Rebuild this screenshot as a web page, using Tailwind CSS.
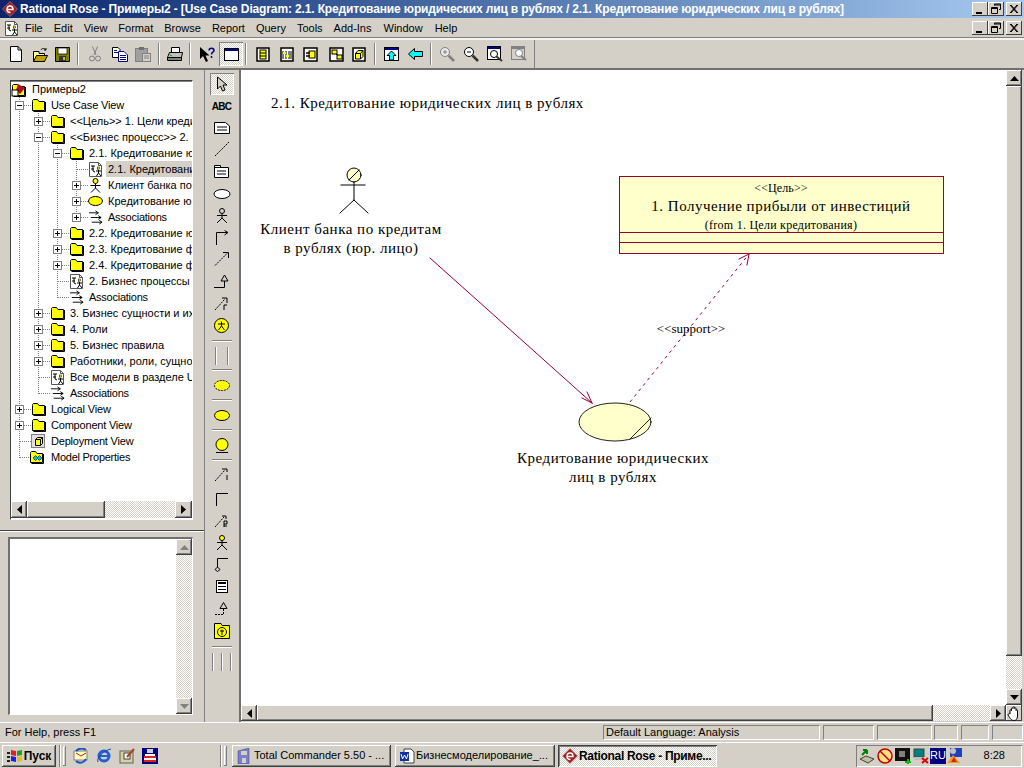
<!DOCTYPE html>
<html><head><meta charset="utf-8"><script src="https://cdn.jsdelivr.net/npm/@tailwindcss/browser@4"></script></head>
<body class="bg-[#d4d0c8]">
<svg width="0" height="0" class="absolute">
<defs>
<symbol id="folder" viewBox="0 0 15 14"><path d="M1.5 3.5V2.500L2.500 1.500H6.500L8 3.500H13.500V12.500H1.500Z" fill="#ffff00" stroke="#000"/><path d="M14.500 4V13.500H2.500" fill="none" stroke="#000"/></symbol>
<symbol id="diagdoc" viewBox="0 0 15 15"><path d="M1.500 .5H10.500L13.500 3.500V14.500H1.500Z" fill="#fff" stroke="#555"/><path d="M10.500 .5V3.500H13.500" fill="none" stroke="#555"/><path d="M3 4H7M5 4V9L7 10M3 7H6M10 6.500V7.500M8 9H13M10.500 8V11L8.500 14M10.500 11L13 14" fill="none" stroke="#000"/><rect x="9.500" y="5" width="2" height="2" fill="#ffff00" stroke="#000" stroke-width=".5"/></symbol>
<symbol id="person" viewBox="0 0 15 15"><circle cx="7.500" cy="3" r="2.500" fill="#ffff00" stroke="#000"/><path d="M7.500 5.500V10M2.500 7.500H12.500M7.500 10L3 14.500M7.500 10L12 14.500" fill="none" stroke="#000"/></symbol>
<symbol id="assoc" viewBox="0 0 16 15"><path d="M1 2.500H11M8 .5L11 2.500L8 4.500M3 7.500H14M11 5.500L14 7.500L11 9.500M4 12.500H15M12 10.500L15 12.500L12 14.500" fill="none" stroke="#000"/></symbol>
<symbol id="plus" viewBox="0 0 9 9"><rect x=".5" y=".5" width="8" height="8" fill="#fff" stroke="#808080"/><path d="M2 4.500H7M4.500 2V7" stroke="#000"/></symbol>
<symbol id="minus" viewBox="0 0 9 9"><rect x=".5" y=".5" width="8" height="8" fill="#fff" stroke="#808080"/><path d="M2 4.500H7" stroke="#000"/></symbol>
<symbol id="rose" viewBox="0 0 16 16"><path d="M8 .5L15.500 8L8 15.500L.5 8Z" fill="#a02020" stroke="#d08080" stroke-width=".6"/><path d="M5 8.500H11C11 6 9.500 5 8 5C6 5 5 6.500 5 8.500C5 10.500 6.500 11.500 8.500 11.500" fill="none" stroke="#fff" stroke-width="1.500"/></symbol>
<symbol id="winmin" viewBox="0 0 16 14"><path d="M4 10H10V12H4Z" fill="#000"/></symbol>
<symbol id="winres" viewBox="0 0 16 14"><path d="M6.500 3.500V2H12.500V7.500H11M6.500 3H12.500M3.500 5.500H9.500V11.500H3.500ZM3.500 6.500H9.500" fill="none" stroke="#000"/></symbol>
<symbol id="winx" viewBox="0 0 16 14"><path d="M4 3L11 11M5 3L12 11M11 3L4 11M12 3L5 11" fill="none" stroke="#000"/></symbol>
</defs>
</svg>
<div class="flex h-[768px] w-[1024px] flex-col overflow-hidden bg-[#d4d0c8] font-['Liberation_Sans',sans-serif] text-[11px] text-black">

<!-- title bar -->
<div class="flex h-[18px] shrink-0 items-center bg-gradient-to-r from-[#0a246a] to-[#a6caf0] pl-[2px] pr-[2px]">
  <svg class="shrink-0" width="16" height="16"><use href="#rose"/></svg>
  <span class="ml-[2px] whitespace-nowrap text-[12px] font-bold tracking-[-0.135px] text-white">Rational Rose - Примеры2 - [Use Case Diagram: 2.1. Кредитование юридических лиц в рублях / 2.1. Кредитование юридических лиц в рублях]</span>
  <div class="ml-auto flex items-center">
    <div class="flex h-[14px] w-[16px] items-center justify-center bg-[#d4d0c8] shadow-[inset_-1px_-1px_#404040,inset_1px_1px_#fff]"><svg width="16" height="14"><use href="#winmin"/></svg></div>
    <div class="flex h-[14px] w-[16px] items-center justify-center bg-[#d4d0c8] shadow-[inset_-1px_-1px_#404040,inset_1px_1px_#fff]"><svg width="16" height="14"><use href="#winres"/></svg></div>
    <div class="ml-[2px] flex h-[14px] w-[16px] items-center justify-center bg-[#d4d0c8] shadow-[inset_-1px_-1px_#404040,inset_1px_1px_#fff]"><svg width="16" height="14"><use href="#winx"/></svg></div>
  </div>
</div>

<!-- menu bar -->
<div class="flex h-[20px] shrink-0 items-center pl-[4px] pr-[2px]">
  <svg width="15" height="15"><use href="#diagdoc"/></svg>
  <div class="ml-[6px] flex gap-[11px]">
    <span>File</span><span>Edit</span><span>View</span><span>Format</span><span>Browse</span><span>Report</span><span>Query</span><span>Tools</span><span>Add-Ins</span><span class="ml-[1px]">Window</span><span class="ml-[1px]">Help</span>
  </div>
  <div class="ml-auto flex items-center">
    <div class="flex h-[14px] w-[16px] items-center justify-center shadow-[inset_-1px_-1px_#404040,inset_1px_1px_#fff]"><svg width="16" height="14"><use href="#winmin"/></svg></div>
    <div class="flex h-[14px] w-[16px] items-center justify-center shadow-[inset_-1px_-1px_#404040,inset_1px_1px_#fff]"><svg width="16" height="14"><use href="#winres"/></svg></div>
    <div class="ml-[2px] flex h-[14px] w-[16px] items-center justify-center shadow-[inset_-1px_-1px_#404040,inset_1px_1px_#fff]"><svg width="16" height="14"><use href="#winx"/></svg></div>
  </div>
</div>

<!-- toolbar -->
<div class="flex h-[32px] shrink-0 items-center border-b-2 border-t-[2px] border-b-[#707070] border-t-[#f4f3f0] pl-[4px] shadow-[0_-1px_#808080]">
  <div class="flex h-full w-[24px] items-center justify-center"><svg width="14" height="16"><path d="M1.500 .5H9L12.500 4V15.500H1.500Z" fill="#fff" stroke="#000"/><path d="M9 .5V4H12.500" fill="none" stroke="#000"/></svg></div>
  <div class="flex h-full w-[23px] items-center justify-center"><svg width="16" height="15"><path d="M1.500 4.500H7V6.500H12.500V14.500H1.500Z" fill="#ffff99" stroke="#000"/><path d="M1.500 14.500L4.500 8.500H15.500L12.500 14.500Z" fill="#c0a000" stroke="#000"/><path d="M9 3C10 1 12 1 14 3M14 1V3H12" fill="none" stroke="#000"/></svg></div>
  <div class="flex h-full w-[23px] items-center justify-center"><svg width="15" height="15"><path d="M.5 .5H14.500V14.500H.5Z" fill="#808000" stroke="#000"/><rect x="3" y="1" width="9" height="6" fill="#fff" stroke="#000" stroke-width=".7"/><rect x="4" y="9" width="7" height="5" fill="#333"/><rect x="8" y="10" width="2" height="3" fill="#c0c000"/></svg></div>
  <div class="flex h-full w-[8px] items-center justify-center"><div class="h-[22px] w-[2px] border-l border-r border-l-[#808080] border-r-white"></div></div>
  <div class="flex h-full w-[26px] items-center justify-center"><svg width="12" height="16"><path d="M3.500 .5L7 9M8.500 .5L5 9" stroke="#808080" fill="none"/><circle cx="3" cy="12.500" r="2.500" fill="none" stroke="#808080"/><circle cx="9" cy="12.500" r="2.500" fill="none" stroke="#808080"/></svg></div>
  <div class="flex h-full w-[23px] items-center justify-center"><svg width="16" height="15"><path d="M.5 .5H6L8 2.500V10.500H.5Z" fill="#fff" stroke="#000"/><path d="M6.500 4.500H12L15.500 8V14.500H6.500Z" fill="#fff" stroke="#000080"/><path d="M2 3.500H5M2 5.500H6M8 8.500H14M8 10.500H14M8 12.500H14" stroke="#000080"/></svg></div>
  <div class="flex h-full w-[23px] items-center justify-center"><svg width="16" height="16"><rect x=".5" y="2.500" width="12" height="13" fill="#a0a0a0" stroke="#808080"/><rect x="4" y="1" width="5" height="3" fill="#707070"/><rect x="7.500" y="7.500" width="8" height="8" fill="#d4d0c8" stroke="#808080"/><path d="M9 10H14M9 12H14" stroke="#808080"/></svg></div>
  <div class="flex h-full w-[10px] items-center justify-center"><div class="h-[22px] w-[2px] border-l border-r border-l-[#808080] border-r-white"></div></div>
  <div class="flex h-full w-[21px] items-center justify-center"><svg width="16" height="15"><path d="M4.500 .5H12.500V5.500H4.500Z" fill="#fff" stroke="#000"/><path d="M2.500 5.500H15.500L14.500 10.500H.5Z" fill="#c0c0c0" stroke="#000"/><path d="M.5 10.500H14.500V13.500H.5Z" fill="#808080" stroke="#000"/><rect x="3" y="8" width="2" height="1" fill="#00c000"/></svg></div>
  <div class="flex h-full w-[10px] items-center justify-center"><div class="h-[22px] w-[2px] border-l border-r border-l-[#808080] border-r-white"></div></div>
  <div class="flex h-full w-[24px] items-center justify-center"><svg width="16" height="15"><path d="M1 0V12L4 9L7 15L9 14L6.500 8.500H10.500Z" fill="#000"/><path d="M10 3.500C10 .5 15 .5 15 3.500C15 5.500 12.500 5 12.500 7.500M12.500 9V11" fill="none" stroke="#000080" stroke-width="1.500"/></svg></div>
  <div class="flex h-[24px] w-[24px] items-center justify-center bg-[repeating-conic-gradient(#d4d0c8_0_25%,#fff_0_50%)] bg-[length:2px_2px] shadow-[inset_1px_1px_#808080,inset_-1px_-1px_#fff]"><svg width="15" height="13"><rect x=".5" y=".5" width="14" height="12" fill="#fff" stroke="#000"/><rect x="1" y="1" width="13" height="2" fill="#000080"/></svg></div>
  <div class="flex h-full w-[6px] items-center justify-center"><div class="h-[22px] w-[2px] border-l border-r border-l-[#808080] border-r-white"></div></div>
  <div class="flex h-full w-[28px] items-center justify-center"><svg width="14" height="15"><rect x="1" y="1" width="12" height="13" fill="#fff" stroke="#000" stroke-width="1.500"/><rect x="4" y="3" width="6" height="9" fill="#ffff00" stroke="#000"/><path d="M4 6H10M4 9H10" stroke="#000"/></svg></div>
  <div class="flex h-full w-[20px] items-center justify-center"><svg width="14" height="15"><rect x="1" y="1" width="12" height="13" fill="#fff" stroke="#000" stroke-width="1.500"/><path d="M3 4V12M6 4V12M9 4V12M11 4V12" stroke="#000"/><path d="M3 6H6M6 9H9" stroke="#ffff00" stroke-width="2"/></svg></div>
  <div class="flex h-full w-[27px] items-center justify-center"><svg width="15" height="15"><rect x="1" y="1" width="13" height="13" fill="#fff" stroke="#000" stroke-width="1.500"/><rect x="6" y="4" width="6" height="7" fill="#ffff00" stroke="#000"/><path d="M3 6H7M3 9H7" stroke="#000" stroke-width="1.500"/></svg></div>
  <div class="flex h-full w-[24px] items-center justify-center"><svg width="15" height="15"><rect x="1" y="1" width="13" height="13" fill="#fff" stroke="#000" stroke-width="1.500"/><rect x="3" y="3" width="5" height="4" fill="#ffff00" stroke="#000"/><rect x="8" y="8" width="5" height="4" fill="#ffff00" stroke="#000"/><path d="M7 7L9 8" stroke="#000"/></svg></div>
  <div class="flex h-full w-[22px] items-center justify-center"><svg width="14" height="15"><rect x="1" y="1" width="12" height="13" fill="#fff" stroke="#000" stroke-width="1.500"/><path d="M3.500 6.500L6 3.500H11V9.500L8.500 12H3.500Z" fill="#ffff00" stroke="#000"/><path d="M3.500 6.500H8.500V12M8.500 6.500L11 3.500" fill="none" stroke="#000"/></svg></div>
  <div class="flex h-full w-[9px] items-center justify-center"><div class="h-[22px] w-[2px] border-l border-r border-l-[#808080] border-r-white"></div></div>
  <div class="flex h-full w-[24px] items-center justify-center"><svg width="15" height="14"><rect x=".5" y=".5" width="14" height="13" fill="#fff" stroke="#000"/><rect x="1" y="1" width="13" height="2" fill="#000080"/><path d="M7.500 4L12 8.500H9.500V13H5.500V8.500H3Z" fill="#00ffff" stroke="#000"/></svg></div>
  <div class="flex h-full w-[24px] items-center justify-center"><svg width="15" height="12"><path d="M.5 6L6.500 .5V3.500H14.500V8.500H6.500V11.500Z" fill="#00ffff" stroke="#000"/></svg></div>
  <div class="flex h-full w-[8px] items-center justify-center"><div class="h-[22px] w-[2px] border-l border-r border-l-[#808080] border-r-white"></div></div>
  <div class="flex h-full w-[24px] items-center justify-center"><svg width="16" height="16"><circle cx="6" cy="6" r="4.500" fill="#e8e8e8" stroke="#808080"/><path d="M4 6H8M6 4V8" stroke="#808080"/><path d="M9.500 9.500L15 15" stroke="#808080" stroke-width="2.500"/></svg></div>
  <div class="flex h-full w-[23px] items-center justify-center"><svg width="16" height="16"><circle cx="6" cy="6" r="4.500" fill="#fff" stroke="#000"/><path d="M4 6H8" stroke="#000"/><path d="M9.500 9.500L15 15" stroke="#333" stroke-width="2.500"/></svg></div>
  <div class="flex h-full w-[25px] items-center justify-center"><svg width="16" height="16"><rect x=".5" y=".5" width="13" height="13" fill="#fff" stroke="#000"/><rect x="1" y="1" width="12" height="2" fill="#000080"/><circle cx="7" cy="8" r="3.500" fill="#fff" stroke="#000"/><path d="M9.500 10.500L15 15" stroke="#333" stroke-width="2"/></svg></div>
  <div class="flex h-full w-[24px] items-center justify-center"><svg width="16" height="16"><rect x=".5" y=".5" width="13" height="13" fill="#d4d0c8" stroke="#808080"/><rect x="1" y="1" width="12" height="2" fill="#808080"/><circle cx="8" cy="7" r="3.500" fill="#fff" stroke="#808080"/><path d="M10 10L15 14" stroke="#808080" stroke-width="2"/></svg></div>
  <div class="ml-[3px] h-full w-[1px] bg-[#808080]"></div>
</div>

<!-- main -->
<div class="flex h-[652px] shrink-0">
  <!-- left panel -->
  <div class="flex w-[204px] shrink-0 flex-col pl-[10px] pt-[10px]">
    <div class="flex h-[440px] w-[183px] flex-col border-b border-l-[1px] border-r border-t-[1px] border-b-white border-l-[#404040] border-r-white border-t-[#404040] bg-white shadow-[inset_0_1px_#808080]">
      <div class="relative h-[420px] overflow-hidden">
        <svg class="absolute left-0 top-0" width="181" height="420" stroke="#808080" stroke-dasharray="1 1" shape-rendering="crispEdges" fill="none">
          <path d="M8.500 16V376.500M27.500 24V312.500M46.500 56V216.500M65.500 72V136.500"/>
          <path d="M8.500 24.500H20M8.500 328.500H20M8.500 344.500H20M8.500 360.500H20M8.500 376.500H20"/>
          <path d="M27.500 40.500H39M27.500 56.500H39M27.500 232.500H39M27.500 248.500H39M27.500 264.500H39M27.500 280.500H39M27.500 296.500H39M27.500 312.500H39"/>
          <path d="M46.500 72.500H58M46.500 152.500H58M46.500 168.500H58M46.500 184.500H58M46.500 200.500H58M46.500 216.500H58"/>
          <path d="M65.500 88.500H77M65.500 104.500H77M65.500 120.500H77M65.500 136.500H77"/>
        </svg>
        <div class="relative whitespace-nowrap">
          <div class="flex h-4 w-max items-center"><svg width="16" height="15"><use href="#folder" width="15" height="14" y="1"/><path d="M7 2L14 6L9 12L5 8Z" fill="#b01010"/><rect x="1" y="8" width="6" height="6" fill="#fff" stroke="#000"/></svg><span class="ml-[5px]">Примеры2</span></div>
          <div class="flex h-4 w-max items-center pl-[4px]"><svg width="9" height="9"><use href="#minus"/></svg><svg class="ml-[7px]" width="15" height="14"><use href="#folder"/></svg><span class="ml-[5px] tracking-[-0.15px]">Use Case View</span></div>
          <div class="flex h-4 w-max items-center pl-[23px]"><svg width="9" height="9"><use href="#plus"/></svg><svg class="ml-[7px]" width="15" height="14"><use href="#folder"/></svg><span class="ml-[5px]">&lt;&lt;Цель&gt;&gt; 1. Цели креди</span></div>
          <div class="flex h-4 w-max items-center pl-[23px]"><svg width="9" height="9"><use href="#minus"/></svg><svg class="ml-[7px]" width="15" height="14"><use href="#folder"/></svg><span class="ml-[5px]">&lt;&lt;Бизнес процесс&gt;&gt; 2.</span></div>
          <div class="flex h-4 w-max items-center pl-[42px]"><svg width="9" height="9"><use href="#minus"/></svg><svg class="ml-[7px]" width="15" height="14"><use href="#folder"/></svg><span class="ml-[5px]">2.1. Кредитование ю</span></div>
          <div class="flex h-4 w-max items-center pl-[61px]"><div class="w-[9px]"></div><svg class="ml-[7px]" width="15" height="15"><use href="#diagdoc"/></svg><span class="ml-[3px] flex h-4 w-[86px] items-center overflow-hidden bg-[#d4d0c8] pl-[2px]">2.1. Кредитовани</span></div>
          <div class="flex h-4 w-max items-center pl-[61px]"><svg width="9" height="9"><use href="#plus"/></svg><svg class="ml-[7px]" width="15" height="15"><use href="#person"/></svg><span class="ml-[5px]">Клиент банка по</span></div>
          <div class="flex h-4 w-max items-center pl-[61px]"><svg width="9" height="9"><use href="#plus"/></svg><svg class="ml-[7px]" width="15" height="10"><ellipse cx="7.500" cy="5" rx="7" ry="4.500" fill="#ffff00" stroke="#000"/></svg><span class="ml-[5px]">Кредитование ю</span></div>
          <div class="flex h-4 w-max items-center pl-[61px]"><svg width="9" height="9"><use href="#plus"/></svg><svg class="ml-[7px]" width="15" height="15"><use href="#assoc"/></svg><span class="ml-[5px] tracking-[-0.25px]">Associations</span></div>
          <div class="flex h-4 w-max items-center pl-[42px]"><svg width="9" height="9"><use href="#plus"/></svg><svg class="ml-[7px]" width="15" height="14"><use href="#folder"/></svg><span class="ml-[5px]">2.2. Кредитование ю</span></div>
          <div class="flex h-4 w-max items-center pl-[42px]"><svg width="9" height="9"><use href="#plus"/></svg><svg class="ml-[7px]" width="15" height="14"><use href="#folder"/></svg><span class="ml-[5px]">2.3. Кредитование ф</span></div>
          <div class="flex h-4 w-max items-center pl-[42px]"><svg width="9" height="9"><use href="#plus"/></svg><svg class="ml-[7px]" width="15" height="14"><use href="#folder"/></svg><span class="ml-[5px]">2.4. Кредитование ф</span></div>
          <div class="flex h-4 w-max items-center pl-[42px]"><div class="w-[9px]"></div><svg class="ml-[7px]" width="15" height="15"><use href="#diagdoc"/></svg><span class="ml-[5px]">2. Бизнес процессы</span></div>
          <div class="flex h-4 w-max items-center pl-[42px]"><div class="w-[9px]"></div><svg class="ml-[7px]" width="15" height="15"><use href="#assoc"/></svg><span class="ml-[5px] tracking-[-0.25px]">Associations</span></div>
          <div class="flex h-4 w-max items-center pl-[23px]"><svg width="9" height="9"><use href="#plus"/></svg><svg class="ml-[7px]" width="15" height="14"><use href="#folder"/></svg><span class="ml-[5px]">3. Бизнес сущности и их</span></div>
          <div class="flex h-4 w-max items-center pl-[23px]"><svg width="9" height="9"><use href="#plus"/></svg><svg class="ml-[7px]" width="15" height="14"><use href="#folder"/></svg><span class="ml-[5px]">4. Роли</span></div>
          <div class="flex h-4 w-max items-center pl-[23px]"><svg width="9" height="9"><use href="#plus"/></svg><svg class="ml-[7px]" width="15" height="14"><use href="#folder"/></svg><span class="ml-[5px]">5. Бизнес правила</span></div>
          <div class="flex h-4 w-max items-center pl-[23px]"><svg width="9" height="9"><use href="#plus"/></svg><svg class="ml-[7px]" width="15" height="14"><use href="#folder"/></svg><span class="ml-[5px]">Работники, роли, сущно</span></div>
          <div class="flex h-4 w-max items-center pl-[23px]"><div class="w-[9px]"></div><svg class="ml-[7px]" width="15" height="15"><use href="#diagdoc"/></svg><span class="ml-[5px]">Все модели в разделе U</span></div>
          <div class="flex h-4 w-max items-center pl-[23px]"><div class="w-[9px]"></div><svg class="ml-[7px]" width="15" height="15"><use href="#assoc"/></svg><span class="ml-[5px] tracking-[-0.25px]">Associations</span></div>
          <div class="flex h-4 w-max items-center pl-[4px]"><svg width="9" height="9"><use href="#plus"/></svg><svg class="ml-[7px]" width="15" height="14"><use href="#folder"/></svg><span class="ml-[5px] tracking-[-0.15px]">Logical View</span></div>
          <div class="flex h-4 w-max items-center pl-[4px]"><svg width="9" height="9"><use href="#plus"/></svg><svg class="ml-[7px]" width="15" height="14"><use href="#folder"/></svg><span class="ml-[5px] tracking-[-0.2px]">Component View</span></div>
          <div class="flex h-4 w-max items-center pl-[4px]"><div class="w-[9px]"></div><svg class="ml-[7px]" width="15" height="14"><rect x=".5" y=".5" width="13" height="13" fill="#e0e0e0" stroke="#808080"/><path d="M4.500 5.500L6.500 3.500H11.500V9.500L9.500 11.500H4.500Z" fill="#ffff00" stroke="#000"/><path d="M4.500 5.500H9.500V11.500M9.500 5.500L11.500 3.500" fill="none" stroke="#000"/></svg><span class="ml-[5px] tracking-[-0.2px]">Deployment View</span></div>
          <div class="flex h-4 w-max items-center pl-[4px]"><div class="w-[9px]"></div><svg class="ml-[5px] mr-[2px]" width="15" height="14"><use href="#folder"/><path d="M4 8L6.500 5.500L9 8L6.500 10.500ZM8 8L10.500 5.500L13 8L10.500 10.500Z" fill="#00c0e0" stroke="#000" stroke-width=".6"/></svg><span class="ml-[5px] tracking-[-0.25px]">Model Properties</span></div>
        </div>
      </div>
      <!-- tree hscroll -->
      <div class="flex h-[17px] items-stretch bg-[repeating-conic-gradient(#d4d0c8_0_25%,#fff_0_50%)] bg-[length:2px_2px]">
        <div class="flex w-[16px] items-center justify-center bg-[#d4d0c8] shadow-[inset_-1px_-1px_#404040,inset_1px_1px_#fff,inset_-2px_-2px_#808080]"><svg width="5" height="9"><path d="M0 4.500L5 0V9Z"/></svg></div>
        <div class="w-[78px] bg-[#d4d0c8] shadow-[inset_-1px_-1px_#404040,inset_1px_1px_#fff,inset_-2px_-2px_#808080]"></div>
        <div class="ml-auto flex w-[17px] items-center justify-center bg-[#d4d0c8] shadow-[inset_-1px_-1px_#404040,inset_1px_1px_#fff,inset_-2px_-2px_#808080]"><svg width="5" height="9"><path d="M5 4.500L0 0V9Z"/></svg></div>
      </div>
    </div>
    <!-- splitter -->
    <div class="-ml-[10px] mt-[10px] h-[1px] w-[204px] bg-[#404040]"></div>
    <div class="-ml-[10px] h-[1px] w-[204px] bg-white"></div>
    <!-- documentation box -->
    <div class="-ml-[2px] mt-[5px] flex h-[178px] w-[185px] border-b border-l-[2px] border-r border-t-[2px] border-b-white border-l-[#707070] border-r-white border-t-[#707070] bg-white">
      <div class="grow"></div>
      <div class="flex w-[16px] flex-col bg-[repeating-conic-gradient(#d4d0c8_0_25%,#fff_0_50%)] bg-[length:2px_2px]">
        <div class="flex h-[16px] items-center justify-center bg-[#d4d0c8] shadow-[inset_-1px_-1px_#404040,inset_1px_1px_#fff,inset_-2px_-2px_#808080]"><svg width="9" height="5"><path d="M4.500 0L9 5H0Z" fill="#808080"/></svg></div>
        <div class="mt-auto flex h-[16px] items-center justify-center bg-[#d4d0c8] shadow-[inset_-1px_-1px_#404040,inset_1px_1px_#fff,inset_-2px_-2px_#808080]"><svg width="9" height="5"><path d="M4.500 5L9 0H0Z" fill="#808080"/></svg></div>
      </div>
    </div>
  </div>

  <!-- toolbox -->
  <div class="flex w-[37px] shrink-0 flex-col items-center border-l border-r-[2px] border-l-[#808080] border-r-[#707070] pr-[1px] pt-[3px]">
    <div class="flex h-[22px] w-[24px] items-center justify-center bg-[repeating-conic-gradient(#d4d0c8_0_25%,#fff_0_50%)] bg-[length:2px_2px] shadow-[inset_1px_1px_#808080,inset_-1px_-1px_#fff]"><svg width="12" height="16"><path d="M1.500 1V13L4.500 10L6.500 15L9 14L7 9H11Z" fill="#d4d0c8" stroke="#000"/></svg></div>
    <div class="flex h-[22px] items-center text-[10px] font-bold tracking-[-0.7px]">ABC</div>
    <div class="flex h-[21px] items-center"><svg width="16" height="12"><path d="M.5 .5H11.500L15.500 4V11.500H.5Z" fill="#fff" stroke="#000"/><path d="M3 5H13M3 8H13" stroke="#000"/></svg></div>
    <div class="flex h-[22px] items-center"><svg width="16" height="16"><path d="M1 15L15 1" stroke="#000" stroke-dasharray="2 1"/></svg></div>
    <div class="flex h-[22px] items-center"><svg width="15" height="13"><path d="M.5 12.500V.5H6.500V2.500H14.500V12.500Z" fill="#fff" stroke="#000"/><path d="M.5 2.500H7M3 6H12M3 9H12" stroke="#000"/></svg></div>
    <div class="flex h-[23px] items-center"><svg width="18" height="10"><ellipse cx="9" cy="5" rx="8" ry="4.500" fill="#fff" stroke="#000"/></svg></div>
    <div class="flex h-[22px] items-center"><svg width="14" height="16" fill="none" stroke="#000"><circle cx="7" cy="3" r="2.500"/><path d="M7 5.500V10M2 7.500H12M7 10L2 15M7 10L12 15"/></svg></div>
    <div class="flex h-[20px] items-center"><svg width="16" height="15" fill="none" stroke="#000"><path d="M2.500 15V2.500H13M10.500 .5L14 2.500L10.500 5"/></svg></div>
    <div class="flex h-[23px] items-center"><svg width="16" height="15" fill="none" stroke="#000"><path d="M1 14.500L14 1.500" stroke-dasharray="2 1"/><path d="M9 1.500H14.500V7"/></svg></div>
    <div class="flex h-[22px] items-center"><svg width="17" height="15" fill="none" stroke="#000"><path d="M1 13.500H11.500V7"/><path d="M8 7H15L11.500 1Z"/></svg></div>
    <div class="flex h-[22px] items-center"><svg width="16" height="15" fill="none" stroke="#000"><path d="M1 14L11 3" stroke-dasharray="2 1"/><path d="M8 2H13V7M10 14V9H13"/></svg></div>
    <div class="flex h-[23px] items-center"><svg width="15" height="15"><circle cx="7.500" cy="7.500" r="7" fill="#ffff00" stroke="#000"/><path d="M7.500 3.500V8M4 6H11M7.500 8L4.500 12M7.500 8L10.500 12" fill="none" stroke="#000"/></svg></div>
    <div class="mt-[3px] h-[2px] w-[20px] border-t border-b border-t-[#808080] border-b-white"></div>
    <div class="mt-[5px] flex h-[18px] w-[20px] justify-between px-[3px]"><div class="h-full w-[2px] border-l border-r border-l-[#808080] border-r-white"></div><div class="h-full w-[2px] border-l border-r border-l-[#808080] border-r-white"></div></div>
    <div class="mt-[4px] h-[2px] w-[20px] border-t border-b border-t-[#808080] border-b-white"></div>
    <div class="flex h-[28px] items-center"><svg width="16" height="11"><ellipse cx="8" cy="5.500" rx="7.500" ry="5" fill="#ffff00" stroke="#000" stroke-dasharray="2 1"/></svg></div>
    <div class="h-[2px] w-[20px] border-t border-b border-t-[#808080] border-b-white"></div>
    <div class="flex h-[28px] items-center"><svg width="16" height="11"><ellipse cx="8" cy="5.500" rx="7.500" ry="5" fill="#ffff00" stroke="#000"/></svg></div>
    <div class="h-[2px] w-[20px] border-t border-b border-t-[#808080] border-b-white"></div>
    <div class="flex h-[28px] items-center"><svg width="14" height="15"><circle cx="7" cy="6.500" r="6" fill="#ffff00" stroke="#000"/><path d="M1 14.500H13" stroke="#000"/></svg></div>
    <div class="h-[2px] w-[20px] border-t border-b border-t-[#808080] border-b-white"></div>
    <div class="flex h-[27px] items-center"><svg width="16" height="15" fill="none" stroke="#000"><path d="M1 14L11 3" stroke-dasharray="2 1"/><path d="M8 2H13V5M13 8V13"/></svg></div>
    <div class="flex h-[21px] items-center"><svg width="13" height="14" fill="none" stroke="#000"><path d="M1.500 14V1.500H13"/></svg></div>
    <div class="flex h-[22px] items-center"><svg width="15" height="15" fill="none" stroke="#000"><path d="M1 14L10 4" stroke-dasharray="2 1"/><path d="M8 3H12V6M10 14V8H13V11H10M10 13H13"/></svg></div>
    <div class="flex h-[22px] items-center"><svg width="14" height="15"><circle cx="7" cy="3" r="2.500" fill="#ffff00" stroke="#000"/><path d="M7 5.500V10M2 7.500H12M7 10L2 15M7 10L12 15" fill="none" stroke="#000"/></svg></div>
    <div class="flex h-[22px] items-center"><svg width="15" height="15" fill="none" stroke="#000"><path d="M14 1.500H3.500V10M3.500 10L6 12.500L3.500 14.500L1 12.500Z"/></svg></div>
    <div class="flex h-[22px] items-center"><svg width="12" height="13"><rect x=".5" y=".5" width="11" height="12" fill="#fff" stroke="#000"/><path d="M2 3H10" stroke="#000" stroke-width="2"/><path d="M2 6.500H10M2 9.500H10" stroke="#000"/></svg></div>
    <div class="flex h-[22px] items-center"><svg width="15" height="15" fill="none" stroke="#000"><path d="M1 13.500H9.500V8" stroke-dasharray="2 1"/><path d="M6 7.500H13L9.500 1.500Z"/></svg></div>
    <div class="flex h-[23px] items-center"><svg width="16" height="16"><path d="M.5 15.500V.5H7L8 2.500H15.500V15.500Z" fill="#ffff00" stroke="#000"/><circle cx="8" cy="9" r="4.500" fill="none" stroke="#000"/><path d="M8 6.500V12M6 8H10" stroke="#000"/></svg></div>
    <div class="mt-[4px] h-[2px] w-[20px] border-t border-b border-t-[#808080] border-b-white"></div>
    <div class="mt-[5px] flex h-[18px] w-[20px] justify-between"><div class="h-full w-[2px] border-l border-r border-l-[#808080] border-r-white"></div><div class="h-full w-[2px] border-l border-r border-l-[#808080] border-r-white"></div><div class="h-full w-[2px] border-l border-r border-l-[#808080] border-r-white"></div></div>
  </div>

  <!-- canvas + scrollbars -->
  <div class="flex w-[783px] shrink-0 flex-col">
    <div class="flex h-[635px]">
      <div class="relative w-[765px] overflow-hidden bg-white font-['Liberation_Serif',serif] text-[15px] tracking-[0.5px]">
        <svg class="absolute left-0 top-0" width="765" height="635" viewBox="241 70 765 635" fill="none" stroke-linecap="square">
          <circle cx="354" cy="175" r="7" fill="#ffffcc" stroke="#000"/><path d="M349 180L359 170M341 185H365M354 182V200L340 213M354 200L368 213" stroke="#000"/>
          <path d="M430 258L592 403M592 403L582 398M592 403L587 392" stroke="#990033"/>
          <path d="M630 402L749 254" stroke="#990033" stroke-dasharray="3 4" stroke-linecap="butt"/><path d="M749 254L739 259M749 254L747 265" stroke="#990033"/>
          <rect x="619.500" y="176.500" width="324" height="77" fill="#ffffcc" stroke="#990033"/><path d="M619.500 232.500H943.500M619.500 242.500H943.500" stroke="#990033"/>
          <ellipse cx="615" cy="422" rx="36" ry="19" fill="#ffffcc" stroke="#222"/><path d="M630 439L651 418" stroke="#222"/>
        </svg>
        <div class="absolute left-[30px] top-[25px] h-4 whitespace-nowrap leading-4">2.1. Кредитование юридических лиц в рублях</div>
        <div class="absolute left-[10px] top-[150px] w-[200px] text-center leading-[19px]">Клиент банка по кредитам<br>в рублях (юр. лицо)</div>
        <div class="absolute left-[378px] top-[110px] w-[324px] text-center">
          <div class="text-[12px] leading-[16px] tracking-[0.1px]">&lt;&lt;Цель&gt;&gt;</div>
          <div class="mt-[1px] leading-[19px]">1. Получение прибыли от инвестиций</div>
          <div class="text-[12px] leading-[19px] tracking-[0.25px]">(from 1. Цели кредитования)</div>
        </div>
        <div class="absolute left-[400px] top-[251px] w-[100px] text-center text-[13px] leading-4 tracking-normal">&lt;&lt;support&gt;&gt;</div>
        <div class="absolute left-[272px] top-[379px] w-[200px] text-center leading-[19px]">Кредитование юридических<br>лиц в рублях</div>
      </div>
      <div class="flex w-[16px] flex-col bg-[repeating-conic-gradient(#d4d0c8_0_25%,#fff_0_50%)] bg-[length:2px_2px]">
        <div class="flex h-[16px] items-center justify-center bg-[#d4d0c8] shadow-[inset_-1px_-1px_#404040,inset_1px_1px_#fff,inset_-2px_-2px_#808080]"><svg width="9" height="5"><path d="M4.500 0L9 5H0Z"/></svg></div>
        <div class="h-[570px] bg-[#d4d0c8] shadow-[inset_-1px_-1px_#404040,inset_1px_1px_#fff,inset_-2px_-2px_#808080]"></div>
        <div class="mt-auto flex h-[16px] items-center justify-center bg-[#d4d0c8] shadow-[inset_-1px_-1px_#404040,inset_1px_1px_#fff,inset_-2px_-2px_#808080]"><svg width="9" height="5"><path d="M4.500 5L9 0H0Z"/></svg></div>
      </div>
    </div>
    <div class="flex h-[16px] w-[781px] items-stretch">
      <div class="flex w-[765px] bg-[repeating-conic-gradient(#d4d0c8_0_25%,#fff_0_50%)] bg-[length:2px_2px]">
        <div class="flex w-[16px] items-center justify-center bg-[#d4d0c8] shadow-[inset_-1px_-1px_#404040,inset_1px_1px_#fff,inset_-2px_-2px_#808080]"><svg width="5" height="9"><path d="M0 4.500L5 0V9Z"/></svg></div>
        <div class="w-[676px] bg-[#d4d0c8] shadow-[inset_-1px_-1px_#404040,inset_1px_1px_#fff,inset_-2px_-2px_#808080]"></div>
        <div class="ml-auto flex w-[16px] items-center justify-center bg-[#d4d0c8] shadow-[inset_-1px_-1px_#404040,inset_1px_1px_#fff,inset_-2px_-2px_#808080]"><svg width="5" height="9"><path d="M5 4.500L0 0V9Z"/></svg></div>
      </div>
      <div class="flex w-[16px] items-center justify-center bg-[#d4d0c8] shadow-[inset_-1px_-1px_#404040,inset_1px_1px_#fff]"><svg width="14" height="15"><path d="M3 8V4.500C3 3.500 4.500 3.500 4.500 4.500V2.500C4.500 1.500 6 1.500 6 2.500V1.500C6 .5 7.500 .5 7.500 1.500V2.500C7.500 1.500 9 1.500 9 2.500V4.500C9 3.500 10.500 3.500 10.500 4.500V10C10.500 13 9 14.500 7 14.500C4.500 14.500 3.500 13 1 9C1 8 2 7 3 8Z" fill="#fff" stroke="#000"/></svg></div>
    </div>
  </div>
</div>

<!-- status bar -->
<div class="flex h-[20px] shrink-0 items-center border-t border-t-white pl-[5px]">
  <span class="w-[598px]">For Help, press F1</span>
  <div class="flex h-[15px] w-[217px] items-center border border-b-white border-l-[#808080] border-r-white border-t-[#808080] pl-[2px]">Default Language: Analysis</div>
  <div class="ml-[3px] h-[15px] w-[51px] border border-b-white border-l-[#808080] border-r-white border-t-[#808080]"></div>
  <div class="ml-[3px] h-[15px] w-[55px] border border-b-white border-l-[#808080] border-r-white border-t-[#808080]"></div>
  <div class="ml-[2px] h-[15px] w-[24px] border border-b-white border-l-[#808080] border-r-white border-t-[#808080]"></div>
  <div class="ml-[3px] h-[15px] w-[28px] border border-b-white border-l-[#808080] border-r-white border-t-[#808080]"></div>
  <div class="ml-[3px] h-[15px] w-[31px] border border-b-white border-l-[#808080] border-r-white border-t-[#808080]"></div>
</div>

<!-- taskbar -->
<div class="flex h-[26px] shrink-0 items-center border-t border-t-white pl-[2px] pr-[2px]">
  <div class="flex h-[22px] w-[54px] items-center justify-center gap-[1px] text-[12px] font-bold shadow-[inset_-1px_-1px_#404040,inset_1px_1px_#fff,inset_-2px_-2px_#808080]"><svg width="16" height="14"><path d="M0 3H3V5H0ZM0 7H3V9H0ZM0 11H3V13H0Z" fill="#202020"/><path d="M4 1L9 2V7L4 6Z" fill="#e02020"/><path d="M10 2L15 1V6L10 7Z" fill="#20a020"/><path d="M4 7L9 8V13L4 12Z" fill="#2020e0"/><path d="M10 8L15 7V12L10 13Z" fill="#e0c020"/></svg>Пуск</div>
  <div class="ml-[3px] h-[22px] w-[2px] border-l border-r border-l-[#808080] border-r-white"></div>
  <div class="ml-[2px] h-[20px] w-[3px] bg-[#d4d0c8] shadow-[inset_-1px_-1px_#808080,inset_1px_1px_#fff]"></div>
  <div class="ml-[7px] flex items-center gap-[7px]">
    <svg width="16" height="16"><rect x="1" y="3" width="13" height="9" fill="#ffffc0" stroke="#808080"/><path d="M3 5L8 8L13 5" fill="none" stroke="#c02020"/><path d="M3 13C6 16 11 15 13 11M13 2C10 0 6 0 3 3" fill="none" stroke="#2050c0" stroke-width="2"/></svg>
    <svg width="16" height="16"><circle cx="8" cy="8" r="5" fill="none" stroke="#2060d0" stroke-width="3"/><path d="M4 8H13" stroke="#2060d0" stroke-width="2"/><path d="M2 14C0 10 8 2 15 1" fill="none" stroke="#2040a0"/></svg>
    <svg width="16" height="16"><rect x="1" y="3" width="13" height="12" fill="#d8d0a0" stroke="#606060"/><rect x="5" y="5" width="6" height="6" fill="#fff" stroke="#404040"/><path d="M8 9L15 1" stroke="#b04020" stroke-width="2"/></svg>
    <svg width="16" height="16"><rect x="0" y="0" width="16" height="16" fill="#000080"/><rect x="3" y="6" width="10" height="2" fill="#fff"/><rect x="2" y="8" width="12" height="2" fill="#e02020"/><rect x="2" y="10" width="12" height="2" fill="#fff"/><rect x="2" y="12" width="12" height="2" fill="#e02020"/><rect x="5" y="1" width="6" height="4" fill="#d0d0d0"/></svg>
  </div>
  <div class="ml-[62px] h-[22px] w-[2px] border-l border-r border-l-[#808080] border-r-white"></div>
  <div class="ml-[2px] h-[20px] w-[3px] bg-[#d4d0c8] shadow-[inset_-1px_-1px_#808080,inset_1px_1px_#fff]"></div>
  <div class="ml-[5px] flex h-[22px] w-[159px] items-center pl-[5px] shadow-[inset_-1px_-1px_#404040,inset_1px_1px_#fff,inset_-2px_-2px_#808080]"><svg width="14" height="16"><path d="M1 3L12 0V16H1Z" fill="#7a80c8" stroke="#404080" stroke-width=".5"/><rect x="4" y="3" width="6" height="4" fill="#d4d0c8"/><rect x="5" y="10" width="4" height="5" fill="#d4d0c8"/></svg><span class="ml-[3px] whitespace-nowrap">Total Commander 5.50 - ...</span></div>
  <div class="ml-[4px] flex h-[22px] w-[160px] items-center pl-[4px] shadow-[inset_-1px_-1px_#404040,inset_1px_1px_#fff,inset_-2px_-2px_#808080]"><svg width="16" height="16"><path d="M5 1H12L15 4V15H5Z" fill="#fff" stroke="#404040"/><rect x="1" y="4" width="9" height="9" fill="#1030a0"/><path d="M2 6L3.500 11L5.500 7L7.500 11L9 6" fill="none" stroke="#fff"/></svg><span class="ml-[1px] whitespace-nowrap">Бизнесмоделирование_...</span></div>
  <div class="ml-[3px] flex h-[22px] w-[159px] items-center bg-[repeating-conic-gradient(#d4d0c8_0_25%,#fff_0_50%)] bg-[length:2px_2px] pl-[4px] shadow-[inset_1px_1px_#404040,inset_-1px_-1px_#fff,inset_2px_2px_#808080]"><svg class="shrink-0" width="16" height="16"><use href="#rose"/></svg><span class="ml-[1px] whitespace-nowrap text-[12px] font-bold tracking-[-0.3px]">Rational Rose - Приме...</span></div>
  <div class="ml-auto flex h-[22px] w-[166px] items-center pl-[3px] shadow-[inset_1px_1px_#808080,inset_-1px_-1px_#fff]">
    <svg width="16" height="16"><path d="M1 11L7 8L15 11L9 15Z" fill="#c0c0a0" stroke="#404040"/><path d="M3 7L8 2M8 2H4M8 2V6" fill="none" stroke="#008000" stroke-width="2"/></svg>
    <svg class="ml-[2px]" width="16" height="16"><circle cx="8" cy="8" r="7" fill="#ffe080" stroke="#c00000" stroke-width="1.500"/><path d="M3 3L13 13" stroke="#c00000" stroke-width="1.500"/></svg>
    <svg class="ml-[2px]" width="16" height="16"><rect x="0" y="0" width="15" height="13" fill="#101010"/><rect x="4" y="3" width="6" height="6" fill="#808080"/><path d="M10 14H16M13 11V16" stroke="#00c000" stroke-width="2"/></svg>
    <svg class="ml-[2px]" width="16" height="16"><rect x="1" y="1" width="10" height="8" fill="#008080" stroke="#404040"/><rect x="1" y="9" width="11" height="3" fill="#c0c0c0"/><path d="M9 10L15 15M15 10L9 15" stroke="#e00000" stroke-width="2"/></svg>
    <div class="ml-[1px] flex h-[16px] w-[16px] items-center justify-center bg-[#000080] text-white">RU</div>
    <svg class="ml-[1px]" width="16" height="16"><rect x="3" y="0" width="12" height="9" fill="#2040c0"/><circle cx="6" cy="3" r="3" fill="#c0c0c0"/><path d="M0 15L6 7L13 15Z" fill="#f0a000"/><path d="M4 14L7 9L10 14Z" fill="#e02020"/></svg>
    <span class="ml-auto mr-[17px]">8:28</span>
  </div>
</div>
</div>
</body></html>
